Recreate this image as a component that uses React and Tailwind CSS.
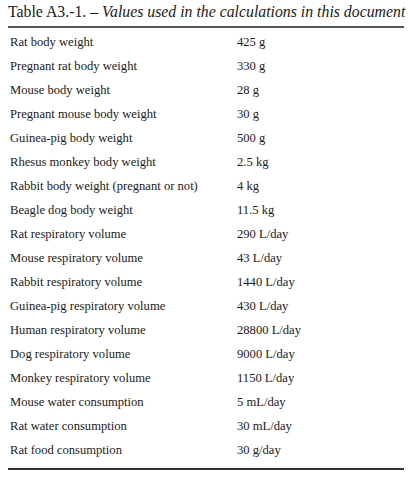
const rows = [
  ["Rat body weight", "425 g"],
  ["Pregnant rat body weight", "330 g"],
  ["Mouse body weight", "28 g"],
  ["Pregnant mouse body weight", "30 g"],
  ["Guinea-pig body weight", "500 g"],
  ["Rhesus monkey body weight", "2.5 kg"],
  ["Rabbit body weight (pregnant or not)", "4 kg"],
  ["Beagle dog body weight", "11.5 kg"],
  ["Rat respiratory volume", "290 L/day"],
  ["Mouse respiratory volume", "43 L/day"],
  ["Rabbit respiratory volume", "1440 L/day"],
  ["Guinea-pig respiratory volume", "430 L/day"],
  ["Human respiratory volume", "28800 L/day"],
  ["Dog respiratory volume", "9000 L/day"],
  ["Monkey respiratory volume", "1150 L/day"],
  ["Mouse water consumption", "5 mL/day"],
  ["Rat water consumption", "30 mL/day"],
  ["Rat food consumption", "30 g/day"],
];

const App = () => {
  return (
    <div className="w-[412px] h-[482px] bg-white text-[#1a1a1a] font-['Liberation_Serif',serif] pl-[8px] pr-[8px] pt-[1px]">
      <div className="text-[15.8px] leading-[22px] whitespace-nowrap">
        Table A3.-1. – <span className="italic">Values used in the calculations in this document</span>
      </div>
      <div className="mt-[3px] h-[2px] bg-[#555] w-[396px]" />
      <div className="pt-[2px]">
        {rows.map(([label, value]) => (
          <div key={label} className="flex h-[24px] items-center text-[12.6px] pl-[2px]">
            <span className="w-[227px]">{label}</span>
            <span>{value}</span>
          </div>
        ))}
      </div>
      <div className="mt-[6px] h-[2px] bg-[#333] w-[396px]" />
    </div>
  );
};

export default App;
